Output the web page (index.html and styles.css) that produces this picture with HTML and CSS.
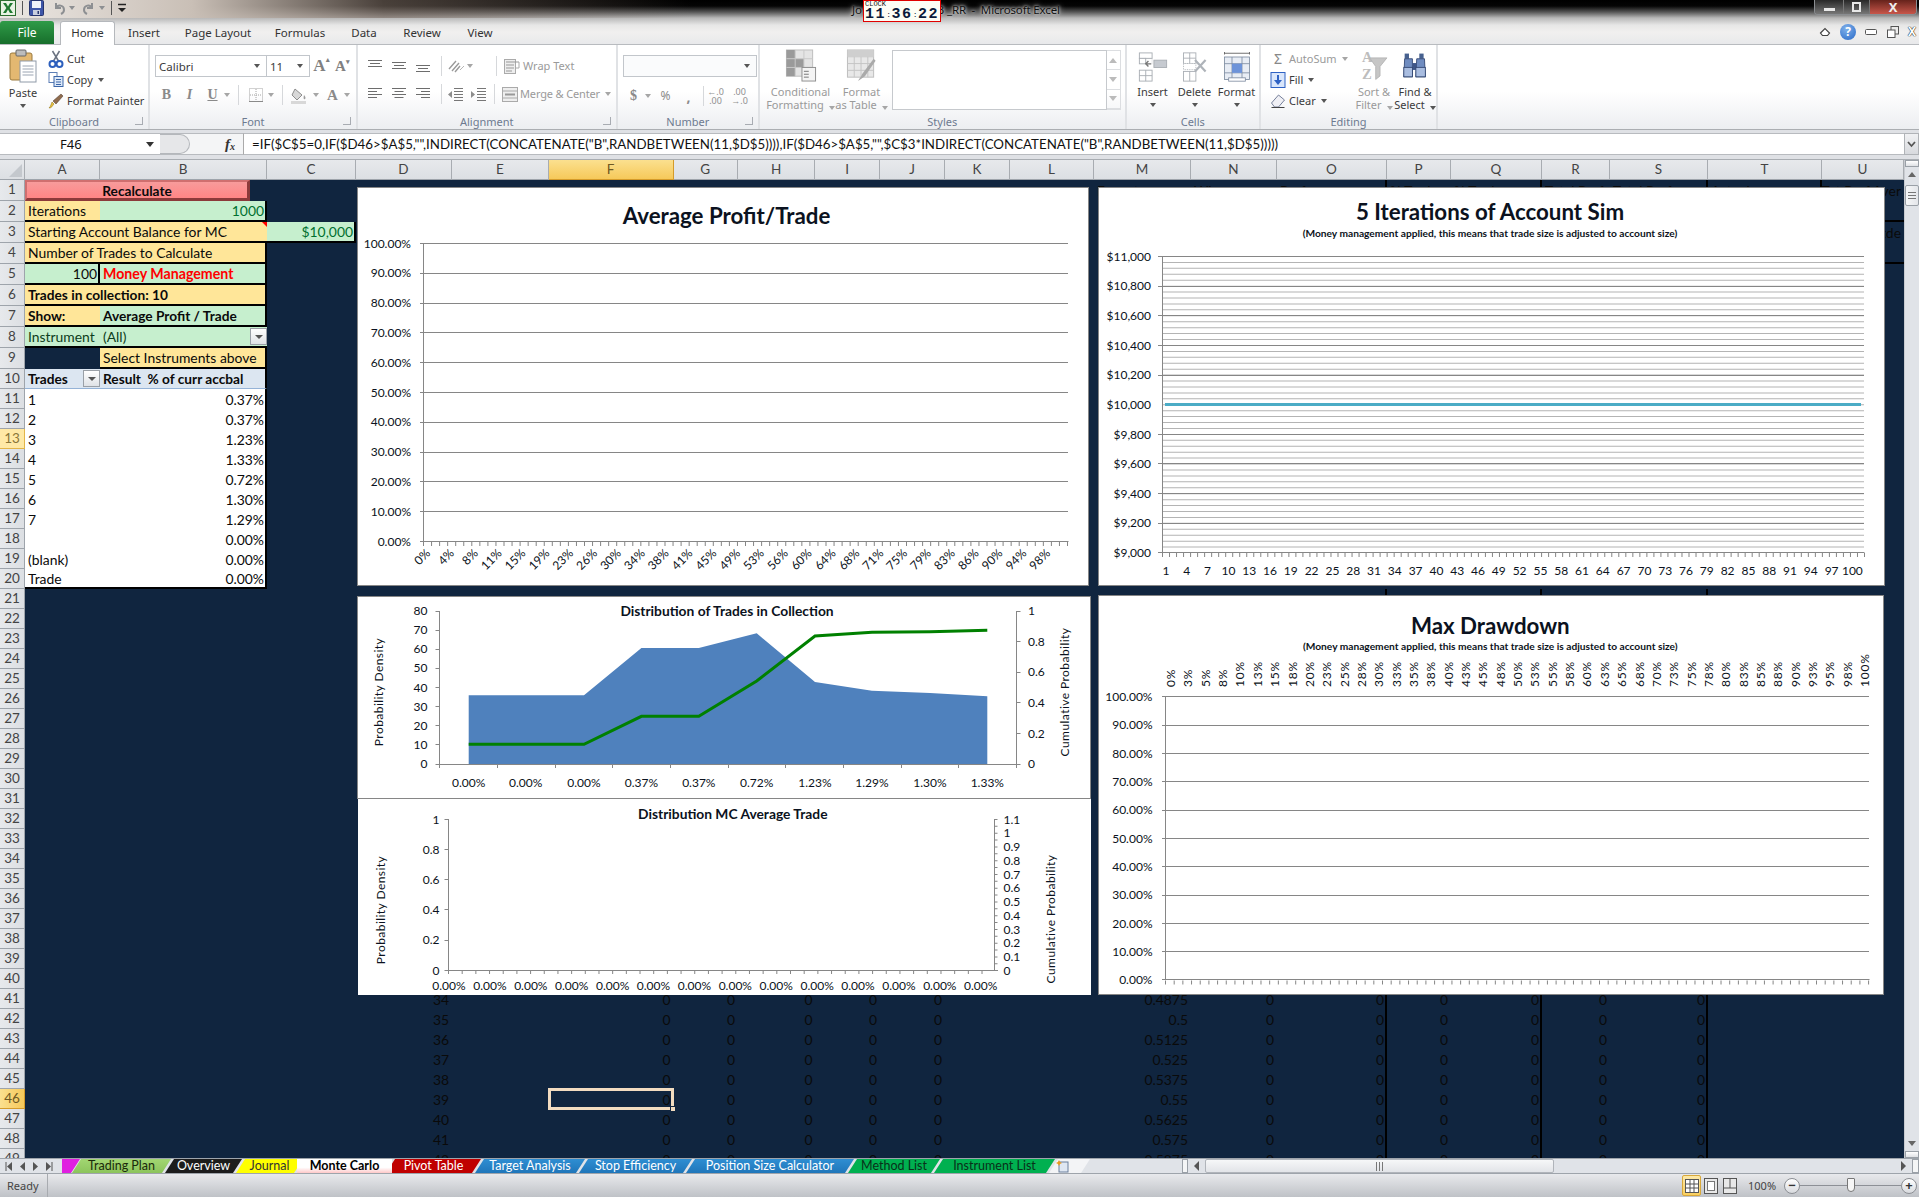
FILE: index.html
```html
<!DOCTYPE html>
<html lang="en">
<head>
<meta charset="utf-8">
<title>Microsoft Excel</title>
<link rel="stylesheet" href="styles.css">
</head>
<body>
<div class="app">
  <header class="top">
    <div class="titlerow">
      <div class="qat">
        <svg class="ic xl" width="16" height="16" viewBox="0 0 16 16"><rect x=".5" y=".5" width="15" height="15" fill="#e8f3e4" stroke="#2d6e31"/><path d="M3 3h3l2 3.4L10 3h3L9.6 8 13 13h-3L8 9.6 6 13H3l3.4-5z" fill="#1f7a30"/></svg>
        <span class="qsep"></span>
        <svg class="ic sv" width="15" height="16" viewBox="0 0 15 16"><rect x=".5" y=".5" width="14" height="15" rx="1" fill="#3d55a8" stroke="#27356f"/><rect x="3" y="1" width="9" height="7" fill="#eef1fa"/><rect x="4" y="10" width="7" height="5" fill="#c8cede"/><rect x="8.5" y="11" width="1.5" height="3" fill="#27356f"/></svg>
        <svg class="ic un" width="12" height="14" viewBox="0 0 12 14"><path d="M3 2v5h5M3 7c2-4 8-3 8 2 0 2-1 3-3 4" fill="none" stroke="#8d8f92" stroke-width="2"/></svg>
        <span class="dd qd"></span>
        <svg class="ic re" width="12" height="14" viewBox="0 0 12 14"><path d="M9 2v5H4M9 7C7 3 1 4 1 9c0 2 1 3 3 4" fill="none" stroke="#8d8f92" stroke-width="2"/></svg>
        <span class="dd qd"></span>
        <span class="qsep"></span>
        <svg class="ic cu" width="8" height="10" viewBox="0 0 8 10"><path d="M0 1.500h8" stroke="#222" stroke-width="1.500"/><path d="M0 5h8L4 9z" fill="#222"/></svg>
      </div>
      <div class="apptitle">Jo<span class="titlegap"></span>B _RR&nbsp; -&nbsp; Microsoft Excel</div>
      <div class="clock"><span class="clocklab">CLOCK</span><div class="clockdigits"><b>11</b><i>:</i><b>36</b><i>:</i><b>22</b></div></div>
      <div class="winbtns">
        <span class="wb wmin"><i></i></span><span class="wb wres"><i></i></span><span class="wb wclose">X</span>
      </div>
    </div>
    <nav class="tabrow">
      <span class="filetab">File</span>
      <span class="tab home">Home</span>
      <span class="tab w56">Insert</span>
      <span class="tab w92">Page Layout</span>
      <span class="tab w72">Formulas</span>
      <span class="tab w56">Data</span>
      <span class="tab w60">Review</span>
      <span class="tab w56">View</span>
      <div class="helpbtns">
        <svg width="12" height="10" viewBox="0 0 12 10"><path d="M1.500 6 6 1.500 10.500 6 8.500 8.500h-5z" fill="#fff" stroke="#444" stroke-width="1.200"/></svg>
        <span class="help">?</span>
        <svg width="12" height="8" viewBox="0 0 12 8"><rect x=".5" y="1.500" width="11" height="5" rx="1" fill="#fff" stroke="#555"/></svg>
        <svg width="12" height="12" viewBox="0 0 12 12"><rect x="4" y=".5" width="7.500" height="7.500" fill="none" stroke="#555"/><rect x=".5" y="4" width="7.500" height="7.500" fill="#fff" stroke="#555"/></svg>
        <span class="bookx">X</span>
      </div>
    </nav>
  </header>

  <section class="ribbon">
    <div class="grp g1">
      <div class="gbody">
        <div class="bigbtn paste">
          <svg width="28" height="34" viewBox="0 0 28 34"><rect x="1" y="4" width="22" height="27" rx="2" fill="#e3b871" stroke="#9a7a3e"/><rect x="7" y="1" width="10" height="6" rx="1" fill="#bcbcbc" stroke="#666"/><rect x="11" y="12" width="16" height="21" fill="#fff" stroke="#8f9aa8"/><path d="M13.500 17h11M13.500 20h11M13.500 23h11M13.500 26h11" stroke="#9aa4b2"/></svg>
          <span class="biglab">Paste</span>
          <span class="dd"></span>
        </div>
        <div class="smallcol">
          <div class="sm"><svg width="15" height="18" viewBox="0 0 15 18"><path d="M4 1l6 10M11 1L5 11" stroke="#6a7280" stroke-width="1.500"/><circle cx="4" cy="14" r="3" fill="none" stroke="#2c5fbd" stroke-width="2"/><circle cx="11" cy="14" r="3" fill="none" stroke="#2c5fbd" stroke-width="2"/></svg>Cut</div>
          <div class="sm"><svg width="15" height="15" viewBox="0 0 15 15"><rect x=".5" y=".5" width="8" height="10" fill="#fff" stroke="#5d7fb5"/><rect x="5.500" y="4.500" width="9" height="10" fill="#dce8f8" stroke="#3c66a8"/><path d="M7.500 7.500h5M7.500 10h5M7.500 12.500h5" stroke="#3c66a8"/></svg>Copy<span class="dd ml"></span></div>
          <div class="sm"><svg width="16" height="16" viewBox="0 0 16 16"><path d="M1 15c3 0 3-2 5-4l-2-2C3 11 3 13 1 15z" fill="#e8c23d" stroke="#8a6d12" stroke-width=".5"/><path d="M5 8l3 3 7-8-2-2z" fill="#8f6b4d" stroke="#4a3728" stroke-width=".5"/></svg>Format Painter</div>
        </div>
      </div>
      <div class="glabel">Clipboard<span class="launch"></span></div>
    </div>

    <div class="grp g2">
      <div class="gbody stack">
        <div class="frow f1">
          <span class="combo fname">Calibri<span class="dd right"></span></span>
          <span class="combo fsize">11<span class="dd right"></span></span>
          <span class="glyph big">A<sup>▴</sup></span>
          <span class="glyph mid">A<sup>▾</sup></span>
        </div>
        <div class="frow f2">
          <span class="gi serif w22">B</span>
          <span class="gi serif it w22">I</span>
          <span class="gi serif un w22">U</span><span class="dd gr"></span>
          <span class="vsep s1"></span>
          <svg class="bd" width="16" height="16" viewBox="0 0 16 16"><rect x="1.500" y="1.500" width="13" height="13" fill="none" stroke="#a4a4a4" stroke-dasharray="1 1"/><path d="M8 2v12M2 8h12" stroke="#a4a4a4" stroke-dasharray="1 1"/><path d="M1 14.500h14" stroke="#8a8a8a"/></svg><span class="dd gr s2"></span>
          <span class="vsep s3"></span>
          <svg class="fl" width="18" height="18" viewBox="0 0 18 18"><path d="M5 3l7 6-5 5-5-5z" fill="#d8d8d8" stroke="#8d8d8d"/><path d="M14 9c1.500 2 2 3 1 4s-2 0-1-4z" fill="#9c9c9c"/><rect x="1" y="15" width="15" height="3" fill="#d8d8d8"/></svg><span class="dd gr s4"></span>
          <span class="gi serif w22 s5">A</span><span class="dd gr"></span>
        </div>
      </div>
      <div class="glabel">Font<span class="launch"></span></div>
    </div>

    <div class="grp g3">
      <div class="gbody stack">
        <div class="frow a1">
          <svg class="al" width="14" height="12" viewBox="0 0 14 12"><path d="M0 .5h14M2 3.500h10M0 6.500h14" stroke="#6d6d6d"/></svg>
          <svg class="al" width="14" height="12" viewBox="0 0 14 12"><path d="M0 2.500h14M2 5.500h10M0 8.500h14" stroke="#6d6d6d"/></svg>
          <svg class="al" width="14" height="12" viewBox="0 0 14 12"><path d="M0 5.500h14M2 8.500h10M0 11.500h14" stroke="#6d6d6d"/></svg>
          <span class="vsep a1s"></span>
          <svg class="or" width="18" height="14" viewBox="0 0 18 14"><path d="M2 10l7-8M5 12l7-8M8 13l5-6" stroke="#9a9a9a" stroke-width="1.400"/><path d="M13 11l4-4" stroke="#b5b5b5"/></svg><span class="dd gr"></span>
          <span class="vsep a1t"></span>
          <svg class="wr" width="17" height="15" viewBox="0 0 17 15"><rect x=".5" y=".5" width="11" height="14" fill="#eee" stroke="#aaa"/><path d="M2 3h13M2 6h8M2 9h8M2 12h6" stroke="#999"/><path d="M15 3v6h-4" fill="none" stroke="#aaa"/></svg>
          <span class="dim">Wrap Text</span>
        </div>
        <div class="frow a2">
          <svg class="al" width="14" height="12" viewBox="0 0 14 12"><path d="M0 .5h14M0 3.500h9M0 6.500h14M0 9.500h9" stroke="#6d6d6d"/></svg>
          <svg class="al" width="14" height="12" viewBox="0 0 14 12"><path d="M0 .5h14M2.500 3.500h9M0 6.500h14M2.500 9.500h9" stroke="#6d6d6d"/></svg>
          <svg class="al" width="14" height="12" viewBox="0 0 14 12"><path d="M0 .5h14M5 3.500h9M0 6.500h14M5 9.500h9" stroke="#6d6d6d"/></svg>
          <span class="vsep a2s"></span>
          <svg class="in1" width="15" height="13" viewBox="0 0 15 13"><path d="M6 .5h9M6 3.500h9M6 6.500h9M6 9.500h9M6 12.500h9" stroke="#777"/><path d="M4 3L0 6.500 4 10z" fill="#8d8d8d"/></svg>
          <svg class="in2" width="15" height="13" viewBox="0 0 15 13"><path d="M6 .5h9M6 3.500h9M6 6.500h9M6 9.500h9M6 12.500h9" stroke="#777"/><path d="M0 3l4 3.500L0 10z" fill="#8d8d8d"/></svg>
          <span class="vsep a2t"></span>
          <svg class="wr" width="16" height="15" viewBox="0 0 16 15"><rect x=".5" y=".5" width="15" height="14" fill="#eee" stroke="#aaa"/><path d="M1 4h14M1 11h14" stroke="#aaa"/><path d="M3 7.500h10" stroke="#999" stroke-width="2"/></svg>
          <span class="dim">Merge &amp; Center</span><span class="dd gr ml"></span>
        </div>
      </div>
      <div class="glabel">Alignment<span class="launch"></span></div>
    </div>

    <div class="grp g4">
      <div class="gbody stack">
        <div class="frow n1"><span class="combo nfmt"><span class="dd right"></span></span></div>
        <div class="frow n2">
          <span class="gi serif dol">$</span><span class="dd gr"></span>
          <span class="gi pct">%</span><span class="gi cma">,</span>
          <span class="vsep n2s"></span>
          <span class="dec">←.0<br>.00</span><span class="dec">.00<br>→.0</span>
        </div>
      </div>
      <div class="glabel">Number<span class="launch"></span></div>
    </div>

    <div class="grp g5">
      <div class="gbody">
        <div class="bigbtn dimb cf">
          <svg width="32" height="34" viewBox="0 0 32 34"><rect x="1" y="1" width="27" height="27" fill="#e4e4e4" stroke="#bdbdbd"/><rect x="1" y="1" width="9" height="9" fill="#9a9a9a"/><rect x="1" y="10" width="18" height="9" fill="#9a9a9a"/><rect x="1" y="19" width="9" height="9" fill="#9a9a9a"/><path d="M10 1v27M19 1v27M1 10h27M1 19h27" stroke="#c8c8c8"/><rect x="17" y="19" width="14" height="14" fill="#f4f4f4" stroke="#8f8f8f"/><path d="M19 23h5M19 26h5M19 29h5" stroke="#777"/></svg>
          <span class="biglab2">Conditional<br>Formatting<span class="dd gr ml"></span></span>
        </div>
        <div class="bigbtn dimb ft">
          <svg width="32" height="34" viewBox="0 0 32 34"><rect x="1" y="1" width="27" height="28" fill="#e8e8e8" stroke="#bdbdbd"/><path d="M8 1v28M15 1v28M22 1v28M1 8h27M1 15h27M1 22h27" stroke="#c4c4c4"/><rect x="1" y="1" width="27" height="7" fill="#cfcfcf"/><path d="M30 12L19 28l-7 5c1-3 3-4 4-7l12-16z" fill="#aaa"/></svg>
          <span class="biglab2">Format<br>as Table<span class="dd gr ml"></span></span>
        </div>
        <div class="gallery"></div>
        <div class="galbtns"><span><i class="up"></i></span><span><i class="dn"></i></span><span><i class="dn"></i></span></div>
      </div>
      <div class="glabel">Styles</div>
    </div>

    <div class="grp g6">
      <div class="gbody">
        <div class="bigbtn cellb">
          <svg width="30" height="30" viewBox="0 0 32 33"><rect x="1" y="1" width="14" height="6" fill="#fff" stroke="#a8adb3"/><rect x="1" y="7" width="7" height="6" fill="#fff" stroke="#a8adb3"/><rect x="8" y="7" width="7" height="6" fill="#fff" stroke="#a8adb3" opacity=".3"/><rect x="17" y="9" width="14" height="8" fill="#c6cad0" stroke="#a8adb3"/><path d="M14 13h-6M11 10l-3 3 3 3" fill="none" stroke="#777" stroke-width="1.500"/><rect x="1" y="20" width="14" height="12" fill="#fff" stroke="#a8adb3"/><path d="M8 20v12M1 26h14" stroke="#a8adb3"/></svg>
          <span class="biglab">Insert</span><span class="dd"></span>
        </div>
        <div class="bigbtn cellb">
          <svg width="26" height="30" viewBox="0 0 28 34"><rect x="1" y="1" width="14" height="12" fill="#fff" stroke="#a8adb3"/><path d="M8 1v12M1 7h14" stroke="#a8adb3"/><rect x="1" y="13" width="14" height="7" fill="#fff" stroke="#a8adb3" stroke-dasharray="1 1"/><rect x="1" y="22" width="14" height="11" fill="#fff" stroke="#a8adb3"/><path d="M8 22v11" stroke="#a8adb3"/><path d="M14 9l12 13M26 9L14 22" stroke="#aeb3b9" stroke-width="2.500"/></svg>
          <span class="biglab">Delete</span><span class="dd"></span>
        </div>
        <div class="bigbtn cellb">
          <svg width="30" height="30" viewBox="0 0 32 36"><path d="M1 1.500h30M1 0v3M31 0v3" stroke="#555"/><rect x="1" y="6" width="30" height="27" fill="#e8edf5" stroke="#7d8ba0"/><path d="M10 6v27M22 6v27M1 14h30M1 25h30" stroke="#7d8ba0"/><rect x="10" y="14" width="12" height="11" fill="#6d93d9"/><rect x="6" y="31" width="20" height="4" fill="#fff" stroke="#7d8ba0"/></svg>
          <span class="biglab">Format</span><span class="dd"></span>
        </div>
      </div>
      <div class="glabel">Cells</div>
    </div>

    <div class="grp g7">
      <div class="gbody">
        <div class="smallcol edit">
          <div class="sm dim"><span class="sigma">Σ</span>AutoSum<span class="dd gr ml"></span></div>
          <div class="sm"><svg width="15" height="16" viewBox="0 0 15 16"><rect x=".5" y=".5" width="14" height="15" fill="#d9e6fb" stroke="#2e62c4"/><path d="M7.500 3v7" stroke="#2e62c4" stroke-width="2"/><path d="M3.500 8h8l-4 5z" fill="#2e62c4"/></svg>Fill<span class="dd ml"></span></div>
          <div class="sm"><svg width="15" height="15" viewBox="0 0 15 15"><path d="M1 10l7-8 6 5-6 7H4z" fill="#f0f0f5" stroke="#76809a"/><path d="M1 14.500h13" stroke="#444"/></svg>Clear<span class="dd ml"></span></div>
        </div>
        <div class="bigbtn dimb sortb">
          <svg width="32" height="32" viewBox="0 0 32 36"><text class="azt" x="2" y="13">A</text><text class="azt" x="2" y="33">Z</text><path d="M11 8h20l-8 10v11l-5 4V18z" fill="#c6c6c6" stroke="#b2b2b2"/></svg>
          <span class="biglab2">Sort &amp;<br>Filter<span class="dd gr ml"></span></span>
        </div>
        <div class="bigbtn findb">
          <svg width="28" height="32" viewBox="0 0 30 36"><rect x="3" y="3" width="5" height="6" fill="#47618f"/><rect x="20" y="3" width="5" height="6" fill="#47618f"/><path d="M3 9h9v21H2zM17 9h9l1 21H16z" fill="#6f8cc0" stroke="#2f4470"/><rect x="12" y="14" width="5" height="8" fill="#3e5688"/><rect x="2" y="19" width="10" height="11" fill="#a9bde0" stroke="#2f4470"/><rect x="16" y="19" width="11" height="11" fill="#a9bde0" stroke="#2f4470"/></svg>
          <span class="biglab2">Find &amp;<br>Select<span class="dd ml"></span></span>
        </div>
      </div>
      <div class="glabel">Editing</div>
    </div>
  </section>

  <div class="fbar">
    <div class="namebox"><span class="nametext">F46</span><span class="dd dark"></span></div>
    <div class="fmid"><span class="ball"></span><span class="fx">f<sub>x</sub></span></div>
    <div class="finput">=IF($C$5=0,IF($D46&gt;$A$5,"",INDIRECT(CONCATENATE("B",RANDBETWEEN(11,$D$5)))),IF($D46&gt;$A$5,"",$C$3*INDIRECT(CONCATENATE("B",RANDBETWEEN(11,$D$5)))))</div>
    <div class="fexp"><svg width="9" height="7" viewBox="0 0 9 7"><path d="M1 1l3.500 4L8 1" fill="none" stroke="#555" stroke-width="1.800"/></svg></div>
  </div>

  <div class="work">
    <div class="grid">
      <div class="row chead">
        <div class="corner"><i></i></div>
        <div>A</div><div>B</div><div>C</div><div>D</div><div>E</div><div class="on">F</div><div>G</div><div>H</div><div>I</div><div>J</div><div>K</div><div>L</div><div>M</div><div>N</div><div>O</div><div>P</div><div>Q</div><div>R</div><div>S</div><div>T</div><div>U</div>
      </div>

      <div class="row tall"><div class="rh">1</div><div class="cell sp-ab"><div class="recalc">Recalculate</div></div>
        <div class="cell m">Expect</div><div class="cell n">Wins</div><div class="cell o rb">Prof</div><div class="cell p">% Trade</div><div class="cell q rb">% Trade</div><div class="cell r">Total Prof</div><div class="cell s rb">Total Prof</div><div class="cell t rb">Actual</div><div class="cell u end">Tot Prof Aver</div></div>
      <div class="row tall"><div class="rh">2</div><div class="cell a yel bb">Iterations</div><div class="cell b grn end dkg bb br">1000</div><div class="cell u bb"></div></div>
      <div class="row tall"><div class="rh">3</div><div class="cell sp-ab yel bb">Starting Account Balance for MC<i class="note"></i></div><div class="cell c grn end dkg bb br">$10,000</div><div class="cell u end">Stde</div></div>
      <div class="row tall"><div class="rh">4</div><div class="cell sp-ab yel bb br">Number of Trades to Calculate</div><div class="cell u bb"></div></div>
      <div class="row tall"><div class="rh">5</div><div class="cell a grn end bb br">100</div><div class="cell b grn bb br red"><b>Money Management</b></div></div>
      <div class="row tall"><div class="rh">6</div><div class="cell sp-ab yel bb br"><b>Trades in collection: 10</b></div></div>
      <div class="row tall"><div class="rh">7</div><div class="cell a yel bb"><b>Show:</b></div><div class="cell b grn bb br"><b>Average Profit / Trade</b></div></div>
      <div class="row tall"><div class="rh">8</div><div class="cell a grn bb dkt">Instrument</div><div class="cell b grn bb dkt">(All)<i class="fbtn end-btn"></i></div></div>
      <div class="row tall"><div class="rh">9</div><div class="cell b yel bb br">Select Instruments above</div></div>
      <div class="row"><div class="rh">10</div><div class="cell a pv"><b>Trades</b><i class="fbtn end-btn"></i></div><div class="cell b pv br"><b>Result&nbsp; % of curr accbal</b></div></div>
      <div class="row"><div class="rh">11</div><div class="cell a wh">1</div><div class="cell b wh end br">0.37%</div></div>
      <div class="row"><div class="rh">12</div><div class="cell a wh">2</div><div class="cell b wh end br">0.37%</div></div>
      <div class="row"><div class="rh act13">13</div><div class="cell a wh">3</div><div class="cell b wh end br">1.23%</div></div>
      <div class="row"><div class="rh">14</div><div class="cell a wh">4</div><div class="cell b wh end br">1.33%</div></div>
      <div class="row"><div class="rh">15</div><div class="cell a wh">5</div><div class="cell b wh end br">0.72%</div></div>
      <div class="row"><div class="rh">16</div><div class="cell a wh">6</div><div class="cell b wh end br">1.30%</div></div>
      <div class="row"><div class="rh">17</div><div class="cell a wh">7</div><div class="cell b wh end br">1.29%</div></div>
      <div class="row"><div class="rh">18</div><div class="cell a wh"></div><div class="cell b wh end br">0.00%</div></div>
      <div class="row"><div class="rh">19</div><div class="cell a wh">(blank)</div><div class="cell b wh end br">0.00%</div></div>
      <div class="row"><div class="rh">20</div><div class="cell a wh bb">Trade</div><div class="cell b wh end bb br">0.00%</div></div>
      <div class="row"><div class="rh">21</div><div class="cell o rb"></div><div class="cell q rb"></div><div class="cell s rb"></div></div>
      <div class="row"><div class="rh">22</div></div><div class="row"><div class="rh">23</div></div><div class="row"><div class="rh">24</div></div><div class="row"><div class="rh">25</div></div><div class="row"><div class="rh">26</div></div><div class="row"><div class="rh">27</div></div><div class="row"><div class="rh">28</div></div><div class="row"><div class="rh">29</div></div><div class="row"><div class="rh">30</div></div>
      <div class="row"><div class="rh">31</div></div><div class="row"><div class="rh">32</div></div><div class="row"><div class="rh">33</div></div><div class="row"><div class="rh">34</div></div><div class="row"><div class="rh">35</div></div><div class="row"><div class="rh">36</div></div><div class="row"><div class="rh">37</div></div><div class="row"><div class="rh">38</div></div><div class="row"><div class="rh">39</div></div><div class="row"><div class="rh">40</div></div>
      <div class="row"><div class="rh">41</div><div class="cell d end">34</div><div class="cell f end">0</div><div class="cell g end">0</div><div class="cell h end">0</div><div class="cell i end">0</div><div class="cell j end">0</div><div class="cell m end">0.4875</div><div class="cell n end">0</div><div class="cell o end rb">0</div><div class="cell p end">0</div><div class="cell q end rb">0</div><div class="cell r end">0</div><div class="cell s end rb">0</div></div>
      <div class="row"><div class="rh">42</div><div class="cell d end">35</div><div class="cell f end">0</div><div class="cell g end">0</div><div class="cell h end">0</div><div class="cell i end">0</div><div class="cell j end">0</div><div class="cell m end">0.5</div><div class="cell n end">0</div><div class="cell o end rb">0</div><div class="cell p end">0</div><div class="cell q end rb">0</div><div class="cell r end">0</div><div class="cell s end rb">0</div></div>
      <div class="row"><div class="rh">43</div><div class="cell d end">36</div><div class="cell f end">0</div><div class="cell g end">0</div><div class="cell h end">0</div><div class="cell i end">0</div><div class="cell j end">0</div><div class="cell m end">0.5125</div><div class="cell n end">0</div><div class="cell o end rb">0</div><div class="cell p end">0</div><div class="cell q end rb">0</div><div class="cell r end">0</div><div class="cell s end rb">0</div></div>
      <div class="row"><div class="rh">44</div><div class="cell d end">37</div><div class="cell f end">0</div><div class="cell g end">0</div><div class="cell h end">0</div><div class="cell i end">0</div><div class="cell j end">0</div><div class="cell m end">0.525</div><div class="cell n end">0</div><div class="cell o end rb">0</div><div class="cell p end">0</div><div class="cell q end rb">0</div><div class="cell r end">0</div><div class="cell s end rb">0</div></div>
      <div class="row"><div class="rh">45</div><div class="cell d end">38</div><div class="cell f end">0</div><div class="cell g end">0</div><div class="cell h end">0</div><div class="cell i end">0</div><div class="cell j end">0</div><div class="cell m end">0.5375</div><div class="cell n end">0</div><div class="cell o end rb">0</div><div class="cell p end">0</div><div class="cell q end rb">0</div><div class="cell r end">0</div><div class="cell s end rb">0</div></div>
      <div class="row"><div class="rh act46">46</div><div class="cell d end">39</div><div class="cell f end">0</div><div class="cell g end">0</div><div class="cell h end">0</div><div class="cell i end">0</div><div class="cell j end">0</div><div class="cell m end">0.55</div><div class="cell n end">0</div><div class="cell o end rb">0</div><div class="cell p end">0</div><div class="cell q end rb">0</div><div class="cell r end">0</div><div class="cell s end rb">0</div></div>
      <div class="row"><div class="rh">47</div><div class="cell d end">40</div><div class="cell f end">0</div><div class="cell g end">0</div><div class="cell h end">0</div><div class="cell i end">0</div><div class="cell j end">0</div><div class="cell m end">0.5625</div><div class="cell n end">0</div><div class="cell o end rb">0</div><div class="cell p end">0</div><div class="cell q end rb">0</div><div class="cell r end">0</div><div class="cell s end rb">0</div></div>
      <div class="row"><div class="rh">48</div><div class="cell d end">41</div><div class="cell f end">0</div><div class="cell g end">0</div><div class="cell h end">0</div><div class="cell i end">0</div><div class="cell j end">0</div><div class="cell m end">0.575</div><div class="cell n end">0</div><div class="cell o end rb">0</div><div class="cell p end">0</div><div class="cell q end rb">0</div><div class="cell r end">0</div><div class="cell s end rb">0</div></div>
      <div class="row"><div class="rh">49</div><div class="cell d end">42</div><div class="cell f end">0</div><div class="cell g end">0</div><div class="cell h end">0</div><div class="cell i end">0</div><div class="cell j end">0</div><div class="cell m end">0.5875</div><div class="cell n end">0</div><div class="cell o end rb">0</div><div class="cell p end">0</div><div class="cell q end rb">0</div><div class="cell r end">0</div><div class="cell s end rb">0</div></div>

      <div class="selbox"><i></i></div>

      <svg class="chart c1" width="732" height="399" viewBox="357 187 732 399">
        <text class="ttl" x="726.500" y="224">Average Profit/Trade</text>
        <path class="maj" d="M420 243.500H1068M420 273.500H1068M420 303.500H1068M420 332.500H1068M420 362.500H1068M420 392.500H1068M420 422.500H1068M420 452.500H1068M420 481.500H1068M420 511.500H1068M420 541.500H1068.500M423.500 243V541"/>
        <line class="tk4" x1="423" x2="1069" y1="544" y2="544" stroke-dasharray="1 7.05"/>
        <g class="yl"><text x="411" y="247.500">100.00%</text><text x="411" y="277">90.00%</text><text x="411" y="307">80.00%</text><text x="411" y="337">70.00%</text><text x="411" y="366.500">60.00%</text><text x="411" y="396.500">50.00%</text><text x="411" y="426">40.00%</text><text x="411" y="456">30.00%</text><text x="411" y="486">20.00%</text><text x="411" y="515.500">10.00%</text><text x="411" y="545.500">0.00%</text></g>
        <g class="yl">
          <text transform="translate(431 554) rotate(-45)">0%</text><text transform="translate(454.900 554) rotate(-45)">4%</text><text transform="translate(478.700 554) rotate(-45)">8%</text><text transform="translate(502.600 554) rotate(-45)">11%</text><text transform="translate(526.400 554) rotate(-45)">15%</text><text transform="translate(550.300 554) rotate(-45)">19%</text><text transform="translate(574.100 554) rotate(-45)">23%</text><text transform="translate(598 554) rotate(-45)">26%</text><text transform="translate(621.800 554) rotate(-45)">30%</text><text transform="translate(645.700 554) rotate(-45)">34%</text><text transform="translate(669.500 554) rotate(-45)">38%</text><text transform="translate(693.400 554) rotate(-45)">41%</text><text transform="translate(717.200 554) rotate(-45)">45%</text><text transform="translate(741.100 554) rotate(-45)">49%</text><text transform="translate(764.900 554) rotate(-45)">53%</text><text transform="translate(788.800 554) rotate(-45)">56%</text><text transform="translate(812.600 554) rotate(-45)">60%</text><text transform="translate(836.500 554) rotate(-45)">64%</text><text transform="translate(860.300 554) rotate(-45)">68%</text><text transform="translate(884.200 554) rotate(-45)">71%</text><text transform="translate(908 554) rotate(-45)">75%</text><text transform="translate(931.900 554) rotate(-45)">79%</text><text transform="translate(955.700 554) rotate(-45)">83%</text><text transform="translate(979.600 554) rotate(-45)">86%</text><text transform="translate(1003.400 554) rotate(-45)">90%</text><text transform="translate(1027.300 554) rotate(-45)">94%</text><text transform="translate(1051 554) rotate(-45)">98%</text>
        </g>
      </svg>

      <svg class="chart c2" width="787" height="399" viewBox="1098 187 787 399">
        <text class="ttl" x="1490" y="220">5 Iterations of Account Sim</text>
        <text class="sub" x="1490" y="236.500">(Money management applied, this means that trade size is adjusted to account size)</text>
        <line class="minor" x1="1513" x2="1513" y1="256" y2="553" stroke-width="702" stroke-dasharray="1 4.930"/>
        <path class="maj" d="M1158 256.500H1864M1158 286.500H1864M1158 315.500H1864M1158 345.500H1864M1158 375.500H1864M1158 434.500H1864M1158 463.500H1864M1158 493.500H1864M1158 523.500H1864M1158 552.500H1864.500M1162.500 256V553"/>
        <line class="tk4" x1="1162" x2="1865" y1="555" y2="555" stroke-dasharray="1 6.020"/>
        <line class="acc" x1="1165" x2="1861" y1="404.500" y2="404.500"/>
        <g class="yl"><text x="1151" y="260.500">$11,000</text><text x="1151" y="290">$10,800</text><text x="1151" y="320">$10,600</text><text x="1151" y="349.500">$10,400</text><text x="1151" y="379">$10,200</text><text x="1151" y="409">$10,000</text><text x="1151" y="438.500">$9,800</text><text x="1151" y="468">$9,600</text><text x="1151" y="497.500">$9,400</text><text x="1151" y="527">$9,200</text><text x="1151" y="557">$9,000</text></g>
        <g class="xl">
          <text x="1166" y="574.500">1</text><text x="1186.800" y="574.500">4</text><text x="1207.600" y="574.500">7</text><text x="1228.400" y="574.500">10</text><text x="1249.200" y="574.500">13</text><text x="1270" y="574.500">16</text><text x="1290.800" y="574.500">19</text><text x="1311.600" y="574.500">22</text><text x="1332.400" y="574.500">25</text><text x="1353.200" y="574.500">28</text><text x="1374" y="574.500">31</text><text x="1394.800" y="574.500">34</text><text x="1415.600" y="574.500">37</text><text x="1436.400" y="574.500">40</text><text x="1457.200" y="574.500">43</text><text x="1478" y="574.500">46</text><text x="1498.800" y="574.500">49</text><text x="1519.600" y="574.500">52</text><text x="1540.400" y="574.500">55</text><text x="1561.200" y="574.500">58</text><text x="1582" y="574.500">61</text><text x="1602.800" y="574.500">64</text><text x="1623.600" y="574.500">67</text><text x="1644.400" y="574.500">70</text><text x="1665.200" y="574.500">73</text><text x="1686" y="574.500">76</text><text x="1706.800" y="574.500">79</text><text x="1727.600" y="574.500">82</text><text x="1748.400" y="574.500">85</text><text x="1769.200" y="574.500">88</text><text x="1790" y="574.500">91</text><text x="1810.800" y="574.500">94</text><text x="1831.600" y="574.500">97</text><text x="1852.400" y="574.500">100</text>
        </g>
      </svg>

      <svg class="chart c3" width="734" height="203" viewBox="357 596 734 203">
        <polygon class="area" points="468.700,764 468.700,695.300 584,695.300 641.400,648 698.800,648 756.700,633.300 815,682 872,690.700 930,693 987.300,696.300 987.300,764"/>
        <polyline class="cum" points="468.700,744.300 584,744.300 641.400,716.300 698.800,716.300 756.700,681 815,636 872,632.300 930,631.700 987.300,630.300"/>
        <path class="maj" d="M439.500 611V768M435.500 611.500H439.500M435.500 630.500H439.500M435.500 649.500H439.500M435.500 668.500H439.500M435.500 687.500H439.500M435.500 706.500H439.500M435.500 725.500H439.500M435.500 744.500H439.500M435.500 764.500H1020.500M1016.500 611V768M1016.500 611.500H1020.500M1016.500 641.500H1020.500M1016.500 672.500H1020.500M1016.500 702.500H1020.500M1016.500 733.500H1020.500M497.500 764V768M555.500 764V768M612.500 764V768M670.500 764V768M728.500 764V768M785.500 764V768M843.500 764V768M901.500 764V768M958.500 764V768"/>
        <text class="ttls" x="727" y="615.500">Distribution of Trades in Collection</text>
        <g class="yl"><text x="427.500" y="615">80</text><text x="427.500" y="634">70</text><text x="427.500" y="653">60</text><text x="427.500" y="672">50</text><text x="427.500" y="691.500">40</text><text x="427.500" y="710.500">30</text><text x="427.500" y="730">20</text><text x="427.500" y="749">10</text><text x="427.500" y="768">0</text></g>
        <g class="rl"><text x="1028" y="615">1</text><text x="1028" y="645.500">0.8</text><text x="1028" y="676">0.6</text><text x="1028" y="707">0.4</text><text x="1028" y="737.500">0.2</text><text x="1028" y="768">0</text></g>
        <g class="xl"><text x="468.700" y="786.500">0.00%</text><text x="525.600" y="786.500">0.00%</text><text x="584" y="786.500">0.00%</text><text x="641.400" y="786.500">0.37%</text><text x="698.800" y="786.500">0.37%</text><text x="756.700" y="786.500">0.72%</text><text x="815" y="786.500">1.23%</text><text x="872" y="786.500">1.29%</text><text x="930" y="786.500">1.30%</text><text x="987.300" y="786.500">1.33%</text></g>
        <text class="axt" transform="translate(383 692) rotate(-90)">Probability Density</text>
        <text class="axt" transform="translate(1069 692) rotate(-90)">Cumulative Probability</text>
      </svg>

      <svg class="chart c4" width="733" height="196" viewBox="358 799 733 196">
        <text class="ttls" x="732.800" y="819">Distribution MC Average Trade</text>
        <path class="maj" d="M448.500 819V971M444.500 819.500H448.500M444.500 849.500H448.500M444.500 879.500H448.500M444.500 909.500H448.500M444.500 940.500H448.500M444.500 970.500H998M994.500 819V971"/>
        <line class="tk3" x1="448" x2="995" y1="972.500" y2="972.500" stroke-dasharray="1 12.680"/>
        <line class="tk3" x1="996" x2="996" y1="819" y2="971" stroke-dasharray="1 5.870"/>
        <g class="yl"><text x="439.500" y="823.500">1</text><text x="439.500" y="853.500">0.8</text><text x="439.500" y="884">0.6</text><text x="439.500" y="914">0.4</text><text x="439.500" y="944">0.2</text><text x="439.500" y="974.500">0</text></g>
        <g class="rl"><text x="1003.500" y="823.500">1.1</text><text x="1003.500" y="837">1</text><text x="1003.500" y="851">0.9</text><text x="1003.500" y="864.500">0.8</text><text x="1003.500" y="878.500">0.7</text><text x="1003.500" y="892">0.6</text><text x="1003.500" y="906">0.5</text><text x="1003.500" y="919.500">0.4</text><text x="1003.500" y="933.500">0.3</text><text x="1003.500" y="947">0.2</text><text x="1003.500" y="961">0.1</text><text x="1003.500" y="974.500">0</text></g>
        <g class="xl"><text x="449" y="989.500">0.00%</text><text x="489.900" y="989.500">0.00%</text><text x="530.800" y="989.500">0.00%</text><text x="571.700" y="989.500">0.00%</text><text x="612.600" y="989.500">0.00%</text><text x="653.500" y="989.500">0.00%</text><text x="694.400" y="989.500">0.00%</text><text x="735.300" y="989.500">0.00%</text><text x="776.200" y="989.500">0.00%</text><text x="817.100" y="989.500">0.00%</text><text x="858" y="989.500">0.00%</text><text x="898.900" y="989.500">0.00%</text><text x="939.800" y="989.500">0.00%</text><text x="980.700" y="989.500">0.00%</text></g>
        <text class="axt" transform="translate(385 910) rotate(-90)">Probability Density</text>
        <text class="axt" transform="translate(1055 919) rotate(-90)">Cumulative Probability</text>
      </svg>

      <svg class="chart c5" width="786" height="400" viewBox="1098 595 786 400">
        <text class="ttl" x="1490.300" y="634">Max Drawdown</text>
        <text class="sub" x="1490.300" y="649.500">(Money management applied, this means that trade size is adjusted to account size)</text>
        <path class="maj" d="M1162 696.500H1869M1162 725.500H1869M1162 753.500H1869M1162 781.500H1869M1162 810.500H1869M1162 838.500H1869M1162 866.500H1869M1162 895.500H1869M1162 923.500H1869M1162 951.500H1869M1162 979.500H1869.500M1165.500 696V980"/>
        <line class="tk4" x1="1165" x2="1870" y1="982.500" y2="982.500" stroke-dasharray="1 7.680"/>
        <g class="yl"><text x="1152.500" y="701">100.00%</text><text x="1152.500" y="729">90.00%</text><text x="1152.500" y="757.500">80.00%</text><text x="1152.500" y="786">70.00%</text><text x="1152.500" y="814">60.00%</text><text x="1152.500" y="842.500">50.00%</text><text x="1152.500" y="870.500">40.00%</text><text x="1152.500" y="899">30.00%</text><text x="1152.500" y="927.500">20.00%</text><text x="1152.500" y="955.500">10.00%</text><text x="1152.500" y="984">0.00%</text></g>
        <g class="vl">
          <text transform="translate(1175 687) rotate(-90)">0%</text><text transform="translate(1192.400 687) rotate(-90)">3%</text><text transform="translate(1209.700 687) rotate(-90)">5%</text><text transform="translate(1227.100 687) rotate(-90)">8%</text><text transform="translate(1244.400 687) rotate(-90)">10%</text><text transform="translate(1261.800 687) rotate(-90)">13%</text><text transform="translate(1279.100 687) rotate(-90)">15%</text><text transform="translate(1296.500 687) rotate(-90)">18%</text><text transform="translate(1313.800 687) rotate(-90)">20%</text><text transform="translate(1331.200 687) rotate(-90)">23%</text><text transform="translate(1348.500 687) rotate(-90)">25%</text><text transform="translate(1365.900 687) rotate(-90)">28%</text><text transform="translate(1383.200 687) rotate(-90)">30%</text><text transform="translate(1400.600 687) rotate(-90)">33%</text><text transform="translate(1417.900 687) rotate(-90)">35%</text><text transform="translate(1435.300 687) rotate(-90)">38%</text><text transform="translate(1452.600 687) rotate(-90)">40%</text><text transform="translate(1470 687) rotate(-90)">43%</text><text transform="translate(1487.300 687) rotate(-90)">45%</text><text transform="translate(1504.700 687) rotate(-90)">48%</text><text transform="translate(1522 687) rotate(-90)">50%</text><text transform="translate(1539.400 687) rotate(-90)">53%</text><text transform="translate(1556.700 687) rotate(-90)">55%</text><text transform="translate(1574.100 687) rotate(-90)">58%</text><text transform="translate(1591.400 687) rotate(-90)">60%</text><text transform="translate(1608.800 687) rotate(-90)">63%</text><text transform="translate(1626.100 687) rotate(-90)">65%</text><text transform="translate(1643.500 687) rotate(-90)">68%</text><text transform="translate(1660.800 687) rotate(-90)">70%</text><text transform="translate(1678.200 687) rotate(-90)">73%</text><text transform="translate(1695.500 687) rotate(-90)">75%</text><text transform="translate(1712.900 687) rotate(-90)">78%</text><text transform="translate(1730.200 687) rotate(-90)">80%</text><text transform="translate(1747.600 687) rotate(-90)">83%</text><text transform="translate(1764.900 687) rotate(-90)">85%</text><text transform="translate(1782.300 687) rotate(-90)">88%</text><text transform="translate(1799.600 687) rotate(-90)">90%</text><text transform="translate(1817 687) rotate(-90)">93%</text><text transform="translate(1834.300 687) rotate(-90)">95%</text><text transform="translate(1851.700 687) rotate(-90)">98%</text><text transform="translate(1869 687) rotate(-90)">100%</text>
        </g>
      </svg>
    </div>

    <div class="vscroll">
      <span class="splitv"></span>
      <span class="vbtn"><i class="up"></i></span>
      <span class="vgap"></span>
      <span class="vthumb"><svg width="8" height="7" viewBox="0 0 8 7"><path d="M0 .5h8M0 3.500h8M0 6.500h8" stroke="#777"/></svg></span>
      <span class="vtrack"></span>
      <span class="vbtn"><i class="dn"></i></span>
      <span class="splitv low"></span>
    </div>
  </div>

  <div class="sheetbar">
    <div class="sheetnav">
      <svg width="8" height="9" viewBox="0 0 8 9"><path d="M1 0v9" stroke="#555"/><path d="M7 0v9L2 4.500z" fill="#555"/></svg>
      <svg width="6" height="9" viewBox="0 0 6 9"><path d="M5 0v9L0 4.500z" fill="#555"/></svg>
      <svg width="6" height="9" viewBox="0 0 6 9"><path d="M1 0v9l5-4.500z" fill="#555"/></svg>
      <svg width="8" height="9" viewBox="0 0 8 9"><path d="M7 0v9" stroke="#555"/><path d="M1 0v9l5-4.500z" fill="#555"/></svg>
    </div>
    <div class="sheets">
      <span class="st st0"></span>
      <span class="st st1">Trading Plan</span>
      <span class="st st2">Overview</span>
      <span class="st st3">Journal</span>
      <span class="st st4">Monte Carlo</span>
      <span class="st st5">Pivot Table</span>
      <span class="st st6">Target Analysis</span>
      <span class="st st7">Stop Efficiency</span>
      <span class="st st8">Position Size Calculator</span>
      <span class="st st9">Method List</span>
      <span class="st st10">Instrument List</span>
      <span class="st st11"><svg width="14" height="14" viewBox="0 0 14 14"><rect x="3" y="3" width="9" height="10" fill="#dfe7f2" stroke="#6a7f9c"/><path d="M3 1l1 2 2 1-2 1-1 2-1-2-2-1 2-1z" fill="#e89a1c"/></svg></span>
    </div>
    <div class="hsplit"></div>
    <div class="hscroll">
      <span class="harrow"><i class="lf"></i></span>
      <span class="hthumb"><svg width="7" height="9" viewBox="0 0 7 9"><path d="M.5 0v9M3.500 0v9M6.500 0v9" stroke="#777"/></svg></span>
      <span class="htrack"></span>
      <span class="harrow"><i class="rt"></i></span>
      <span class="hsplit2"></span>
    </div>
  </div>

  <footer class="status">
    <span class="ready">Ready</span>
    <div class="statright">
      <span class="vw on"><svg width="14" height="14" viewBox="0 0 14 14"><rect x=".5" y=".5" width="13" height="13" fill="#fff" stroke="#555"/><path d="M5 1v12M9 1v12M1 5h12M1 9h12" stroke="#555"/></svg></span>
      <span class="vw"><svg width="14" height="16" viewBox="0 0 14 16"><rect x=".5" y=".5" width="13" height="15" fill="#e8e8e8" stroke="#555"/><rect x="3.500" y="3.500" width="7" height="9" fill="#fff" stroke="#777"/></svg></span>
      <span class="vw"><svg width="14" height="16" viewBox="0 0 14 16"><rect x=".5" y=".5" width="13" height="15" fill="#e8e8e8" stroke="#555"/><path d="M7 1v9M1 10h12" stroke="#555"/></svg></span>
      <span class="zoomtxt">100%</span>
      <span class="zb">−</span>
      <span class="zline"><i></i></span>
      <span class="zb">+</span>
    </div>
  </footer>
</div>
</body>
</html>
```
FILE: styles.css
```css
* { box-sizing: border-box; }
html, body { margin: 0; padding: 0; }
body { width: 1919px; height: 1197px; overflow: hidden; font-family: "Noto Sans", "Open Sans", sans-serif; background: #e0e3e8; }
.app { width: 1919px; height: 1197px; display: flex; flex-direction: column; overflow: hidden; }
i { font-style: normal; display: block; }

.dd { display: inline-block; width: 0; height: 0; border-left: 3px solid transparent; border-right: 3px solid transparent; border-top: 4px solid #555; flex: none; }
.dd.gr { border-top-color: #a6a6a6; }
.dd.dark { border-left-width: 4px; border-right-width: 4px; border-top: 5px solid #333; }
.dd.ml { margin-left: 5px; vertical-align: middle; }

/* title + tabs */
.top { height: 44px; flex: none; position: relative; z-index: 2;
  background:
    linear-gradient(90deg, #ece8e4 0, #c9bfb6 10%, rgba(120,105,95,.6) 20%, rgba(0,0,0,0) 36%) 0 0 / 100% 18px no-repeat,
    linear-gradient(#000 0, #050505 6px, #565656 12px, #b8b8b8 18px, #e6e6e6 25px, #f1f0ef 32px, #e8e9eb 44px); }
.titlerow { height: 21px; display: flex; align-items: flex-start; position: relative; }
.qat { display: flex; align-items: center; height: 16px; width: 852px; flex: none; }
.qat .xl { margin-left: 0; }
.qsep { width: 1px; height: 14px; background: #555; margin: 0 6px; }
.qat .un { margin-left: 9px; }
.qd { margin-left: 4px; border-top-color: #8d8f92; }
.qat .re { margin-left: 8px; }
.qat .cu { margin-left: 0; }
.apptitle { font: 11.5px/20px "Noto Sans", sans-serif; color: #111; white-space: pre; display: flex; text-shadow: 0 0 6px #fff, 0 0 3px #fff; letter-spacing: -.15px; }
.titlegap { display: inline-block; width: 75px; }
.clock { position: absolute; left: 863px; top: 0; width: 78px; height: 22px; background: #fdfdf5; border: 1px solid #e00000; color: #0b1a3a; overflow: hidden; }
.clocklab { display: block; font: 7px/7px "Liberation Mono", monospace; color: #111; padding-left: 1px; }
.clockdigits { display: flex; align-items: center; justify-content: space-between; padding: 0 1px 0 1px; height: 13px; }
.clockdigits b { font: bold 15px/13px "Liberation Mono", monospace; letter-spacing: 1.5px; }
.clockdigits i { font: 8px/13px "Liberation Mono", monospace; }
.winbtns { position: absolute; right: 2px; top: -1px; display: flex; width: 103px; height: 16px; border: 1px solid #8a8d91; border-top: 0; border-radius: 0 0 4px 4px; overflow: hidden; }
.wb { display: flex; align-items: center; justify-content: center; height: 15px; }
.wmin { width: 29px; border-right: 1px solid #777; background: linear-gradient(#222, #777); }
.wmin i { width: 11px; height: 3px; margin-top: 6px; background: #e8e8e8; }
.wres { width: 26px; border-right: 1px solid #777; background: linear-gradient(#222, #777); }
.wres i { width: 9px; height: 10px; border: 2px solid #e8e8e8; }
.wclose { flex: 1; background: linear-gradient(#5f1f18, #c8564a); color: #eee; font: bold 13px "Noto Sans", sans-serif; }

.tabrow { height: 23px; display: flex; align-items: flex-end; position: relative; }
.filetab { width: 54px; height: 23px; background: linear-gradient(#2f9b48, #176e2b); color: #fff; font: 12px/23px "Noto Sans", sans-serif; text-align: center; border-radius: 3px 3px 0 0; margin-right: 6px; }
.tab { font: 11.5px/23px "Noto Sans", sans-serif; color: #333; text-align: center; height: 23px; flex: none; }
.tab.home { width: 55px; background: #fff; border: 1px solid #b5b8bc; border-bottom: 0; border-radius: 3px 3px 0 0; height: 24px; margin-bottom: -1px; line-height: 22px; margin-right: 1px; }
.w56 { width: 56px; }
.w60 { width: 60px; }
.w72 { width: 72px; }
.w92 { width: 92px; }
.helpbtns { position: absolute; right: 3px; top: 2px; width: 97px; height: 18px; display: flex; align-items: center; justify-content: space-between; }
.help { width: 16px; height: 16px; border-radius: 50%; background: radial-gradient(circle at 40% 30%, #7fb0ea, #2869c7); color: #fff; font: bold 12px/16px "Noto Sans", sans-serif; text-align: center; }
.bookx { font: bold 12px/14px "Noto Sans", sans-serif; color: #fff; text-shadow: 0 0 1px #000, 0 0 1px #000; }

/* ribbon */
.ribbon { height: 86px; flex: none; display: flex; background: linear-gradient(#fff 0, #fff 55%, #eceef1 100%); border-top: 1px solid #b8bbbf; border-bottom: 1px solid #abaeb2; font: 11px/14px "Noto Sans", sans-serif; color: #3b3b3b; }
.grp { display: flex; flex-direction: column; border-right: 2px solid #e0e2e5; flex: none; position: relative; }
.g1 { width: 150px; }
.g2 { width: 208px; }
.g3 { width: 259.5px; }
.g4 { width: 142.5px; }
.g5 { width: 366.5px; }
.g6 { width: 134.5px; }
.g7 { width: 177px; }
.gbody { flex: 1; display: flex; min-height: 0; }
.gbody.stack { flex-direction: column; }
.glabel { height: 18px; font: 11px/21px "Noto Sans", sans-serif; color: #6d7a90; text-align: center; position: relative; flex: none; }
.launch { position: absolute; right: 5px; top: 6px; width: 8px; height: 8px; border: 1px solid #a8acb2; border-top: 0; border-left: 0; }

.bigbtn { display: flex; flex-direction: column; align-items: center; flex: none; padding-top: 4px; }
.biglab { margin-top: 3px; line-height: 14px; font-size: 11px; }
.bigbtn .dd { margin-top: 4px; }
.biglab2 { line-height: 13px; text-align: center; margin-top: 3px; white-space: nowrap; }
.dimb { color: #9a9a9a; }
.paste { width: 46px; }
.smallcol { display: flex; flex-direction: column; padding-top: 3px; margin-left: 2px; }
.sm { height: 22px; display: flex; align-items: center; white-space: nowrap; }
.sm svg { width: 16px; margin-right: 3px; flex: none; }

.frow { display: flex; align-items: center; height: 22px; flex: none; }
.f1 { margin-top: 10px; padding-left: 5px; }
.f2 { margin-top: 7px; padding-left: 5px; }
.combo { display: flex; align-items: center; background: #fff; border: 1px solid #c2c6cb; height: 22px; padding-left: 3px; font: 11.5px "Noto Sans", sans-serif; position: relative; }
.combo .right { position: absolute; right: 6px; top: 8px; }
.fname { width: 112px; }
.fsize { width: 43px; border-left: 0; }
.glyph { font: bold 15px "Liberation Serif", serif; color: #808080; text-align: center; width: 21px; }
.glyph.big { font-size: 17px; margin-left: 1px; }
.glyph sup { font-size: 7px; vertical-align: top; }
.gi { text-align: center; flex: none; color: #8a8a8a; }
.w22 { width: 23px; }
.serif { font: bold 14px "Liberation Serif", serif; }
.it { font-style: italic; }
.un { text-decoration: underline; }
.vsep { width: 1px; height: 20px; background: #d6d8db; flex: none; }
.s1 { margin-left: 8px; }
.bd { margin-left: 9px; }
.s2 { margin-left: 4px; }
.s3 { margin-left: 8px; }
.fl { margin-left: 7px; }
.s4 { margin-left: 5px; }
.s5 { margin-left: 2px; font-size: 15px; }

.a1 { margin-top: 9px; height: 24px; padding-left: 10px; }
.a2 { margin-top: 4px; height: 24px; padding-left: 10px; }
.al { margin-right: 10px; flex: none; }
.a1s, .a2s { margin-left: 1px; }
.or { margin-left: 5px; }
.a1 .dd { margin-left: 2px; }
.a1t { margin-left: 23px; }
.a2t { margin-left: 8px; }
.in1 { margin-left: 6px; }
.in2 { margin-left: 8px; }
.wr { margin-left: 7px; margin-right: 2px; flex: none; }
.dim { color: #9a9a9a; white-space: nowrap; }
.a2 .dim { letter-spacing: -.15px; }

.n1 { margin-top: 10px; padding-left: 5px; }
.nfmt { width: 134px; background: #fafbfc; }
.n2 { margin-top: 8px; padding-left: 10px; }
.dol { width: 12px; font-size: 14px; margin-right: 5px; }
.pct { width: 18px; margin-left: 6px; font-size: 12px; }
.cma { width: 12px; margin-left: 8px; font: bold 14px "Noto Sans", sans-serif; }
.n2s { margin-left: 8px; }
.dec { font: 9px/9px "Noto Sans", sans-serif; color: #909090; width: 24px; text-align: center; }
.dec:first-of-type { margin-left: 2px; }

.cf { width: 62px; margin-left: 9.5px; }
.ft { width: 60px; margin-left: 0; }
.gallery { width: 215px; height: 60px; margin: 5px 0 0 0; background: #fff; border: 1px solid #c6c9cd; }
.galbtns { width: 14px; height: 60px; margin-top: 5px; display: flex; flex-direction: column; border: 1px solid #dcdee1; border-left: 0; }
.galbtns span { flex: 1; display: flex; align-items: center; justify-content: center; border-bottom: 1px solid #dcdee1; }
.up, .dn { width: 0; height: 0; border-left: 4px solid transparent; border-right: 4px solid transparent; }
.up { border-bottom: 5px solid #666; }
.dn { border-top: 5px solid #666; }
.galbtns .up { border-bottom-color: #bbb; }
.galbtns .dn { border-top-color: #bbb; }
.cellb { width: 42px; padding-top: 7px; }
.cellb:first-child { margin-left: 5px; }
.edit { margin-left: 9px; width: 84px; }
.sigma { width: 16px; margin-right: 3px; color: #888; font-size: 14px; text-align: center; }
.sortb { width: 40px; margin-left: 0; padding-top: 6px; }
.findb { width: 42px; padding-top: 6px; }
.azt { font: bold 17px "Liberation Serif", serif; fill: #bdbdbd; }

/* formula bar */
.fbar { height: 30px; flex: none; display: flex; padding: 3px 0 4px; background: #dfe1e5; border-bottom: 1px solid #a9adb2; }
.namebox { width: 160px; background: #fff; display: flex; align-items: center; justify-content: space-between; padding: 0 6px 0 60px; font: 13px "Noto Sans", sans-serif; color: #111; border-top: 1px solid #b8bbbf; border-bottom: 1px solid #b8bbbf; }
.fmid { width: 84px; display: flex; align-items: center; background: #f4f5f6; border-top: 1px solid #b8bbbf; border-bottom: 1px solid #b8bbbf; border-right: 1px solid #aaa; }
.ball { width: 30px; height: 20px; border-radius: 0 14px 14px 0; background: #e6e7e9; border: 1px solid #b4b7bb; border-left: 0; margin-left: 0; position: relative; }
.fx { font: italic bold 15px "Liberation Serif", serif; margin-left: 35px; color: #333; }
.fx sub { font-size: 10px; vertical-align: -1px; }
.finput { flex: 1; background: #fff; font: 13.3px/21px "Lato", sans-serif; color: #111; padding-left: 8px; border-top: 1px solid #b8bbbf; border-bottom: 1px solid #b8bbbf; white-space: nowrap; overflow: hidden; }
.fexp { width: 15px; background: linear-gradient(#f0f1f3, #d8dade); border: 1px solid #b0b3b7; display: flex; align-items: center; justify-content: center; }

/* sheet */
.work { height: 998px; flex: none; display: flex; }
.grid { width: 1904px; height: 998px; position: relative; overflow: hidden; background: #10253f; }
.row { display: grid; height: 20px; grid-template-columns: 25px 75px 167px 89px 96px 96.6px 125px 64.4px 77.5px 64.5px 65px 65px 84px 97px 86px 110px 64px 91px 68px 98px 114px 82px; }
.row.tall { height: 21px; }
.chead > div { height: 20px; background: linear-gradient(#e7e9ec, #dcdfe3); border-right: 1px solid #a8acb1; border-bottom: 1px solid #9ea4ab; font: 13.5px/19px "Lato", sans-serif; color: #444; text-align: center; }
.chead > div.on { background: linear-gradient(#fbe08f, #f6c95a); border-right-color: #d49b2a; border-bottom-color: #d49b2a; color: #6f5a23; }
.chead .corner { position: relative; overflow: hidden; }
.corner i { position: absolute; right: 2px; bottom: 2px; width: 0; height: 0; border-left: 13px solid transparent; border-bottom: 13px solid #c4c8cd; }
.rh { grid-column: 1; background: linear-gradient(90deg, #e7e9ec, #dcdfe3); border-right: 1px solid #9ea4ab; border-bottom: 1px solid #9ea4ab; font: 13.5px/19px "Lato", sans-serif; color: #444; text-align: center; }
.rh.act13 { background: #ffe9a6; color: #8a7638; border-color: #e3b548; }
.rh.act46 { background: linear-gradient(90deg, #fbe08f, #f6c95a); color: #6f5a23; border-color: #d49b2a; }

.cell { display: flex; align-items: center; padding: 0 3px; overflow: hidden; white-space: nowrap; font: 13.9px "Lato", sans-serif; color: #0a0a0a; position: relative; min-width: 0; }
.cell b { font-size: 13.7px; }
.cell.red b { font-size: 14.2px; }
.cell.end { justify-content: flex-end; }
.cell.end.br { padding-right: 1px; }
.a { grid-column: 2; }
.b { grid-column: 3; }
.c { grid-column: 4; }
.d { grid-column: 5; }
.f { grid-column: 7; }
.g { grid-column: 8; }
.h { grid-column: 9; }
.i { grid-column: 10; }
.j { grid-column: 11; }
.m { grid-column: 14; }
.n { grid-column: 15; }
.o { grid-column: 16; }
.p { grid-column: 17; }
.q { grid-column: 18; }
.r { grid-column: 19; }
.s { grid-column: 20; }
.t { grid-column: 21; }
.u { grid-column: 22; }
.sp-ab { grid-column: 2 / 4; }
.yel { background: #ffe699; }
.grn { background: #c6efce; }
.pv { background: #dce6f1; border-bottom: 1px solid #95b3d7; }
.wh { background: #fff; }
.bb { border-bottom: 2px solid #000; }
.br { border-right: 2px solid #000; }
.rb { border-right: 2px solid #000; padding-right: 1px; }
.dkg { color: #00702f; }
.dkt { color: #0c3d20; }
.red b { color: #ff0000; }
.note { position: absolute; right: 0; top: 0; width: 0; height: 0; border-top: 5px solid #f00; border-left: 5px solid transparent; }
.fbtn { position: absolute; right: 0; top: 1px; width: 17px; height: 17px; border: 1px solid #9aa0a7; background: linear-gradient(#fff, #dfe2e6); }
.fbtn::after { content: ""; position: absolute; left: 4px; top: 6px; border-left: 4px solid transparent; border-right: 4px solid transparent; border-top: 4px solid #555; }
.recalc { width: 225px; height: 21px; margin-left: -3px; background: linear-gradient(#f79b9b, #ff8585); border: 2px solid #cf6f6f; border-right: 3px solid #8c3a3a; border-bottom: 3px solid #8c3a3a; text-align: center; font: bold 13.7px/17px "Lato", sans-serif; color: #0a0a0a; }

.selbox { position: absolute; left: 548px; top: 928px; width: 126px; height: 22px; border: 3px solid #f2dcc0; }
.selbox i { position: absolute; right: -5px; bottom: -5px; width: 6px; height: 6px; background: #f2dcc0; border: 1px solid #10253f; }

.chart { position: absolute; background: #fff; outline: 1px solid #868686; outline-offset: -1px; display: block; }
.c1 { left: 357px; top: 27px; }
.c2 { left: 1098px; top: 27px; }
.c3 { left: 357px; top: 436px; }
.c4 { left: 358px; top: 639px; outline-color: #fff; }
.c5 { left: 1098px; top: 435px; }
.chart text { font-family: "Lato", sans-serif; fill: #0b1220; }
.ttl { font-size: 22.3px; font-weight: 700; text-anchor: middle; }
.ttls { font-size: 13.8px; font-weight: 700; text-anchor: middle; }
.sub { font-size: 10.2px; font-weight: 700; text-anchor: middle; }
.yl text { font-size: 12px; text-anchor: end; }
.xl text { font-size: 12px; text-anchor: middle; }
.rl text { font-size: 12px; text-anchor: start; }
.vl text { font-size: 12px; text-anchor: start; letter-spacing: .8px; }
.axt { font-size: 12px; text-anchor: middle; letter-spacing: .45px; }
.maj { fill: none; stroke: #868686; stroke-width: 1; }
.minor { stroke: #b4b4b4; fill: none; }
.tk4 { stroke: #868686; stroke-width: 4; fill: none; }
.tk3 { stroke: #868686; stroke-width: 3; fill: none; }
.acc { stroke: #4bacc6; stroke-width: 3; }
.area { fill: #4f81bd; }
.cum { fill: none; stroke: #008000; stroke-width: 3; }

.vscroll { width: 15px; height: 998px; flex: none; display: flex; flex-direction: column; align-items: stretch; background: #e0e3e8; border-left: 1px solid #c8cbd0; }
.splitv { height: 7px; background: linear-gradient(#fff, #dfe1e5); border: 1px solid #9aa0a7; flex: none; }
.vbtn { height: 15px; display: flex; align-items: center; justify-content: center; flex: none; }
.vgap { height: 3px; flex: none; }
.vthumb { height: 21px; background: linear-gradient(90deg, #f6f7f8, #e4e6ea); border: 1px solid #9aa0a7; border-radius: 2px; display: flex; align-items: center; justify-content: center; flex: none; }
.vtrack { flex: 1; }

/* sheet tabs */
.sheetbar { height: 16px; flex: none; display: flex; background: #e0e3e8; border-top: 1px solid #9ea4ab; border-bottom: 1px solid #9ea4ab; }
.sheetnav { width: 62px; flex: none; display: flex; align-items: center; justify-content: space-between; padding: 0 9px 0 5px; }
.sheets { width: 1120px; flex: none; display: flex; overflow: hidden; }
.st { height: 14px; flex: none; margin-right: -6px; clip-path: polygon(9px 0, 100% 0, calc(100% - 9px) 100%, 0 100%); font: 12.5px/14px "Lato", sans-serif; text-align: center; white-space: nowrap; padding: 0 8px; }
.st0 { width: 18px; background: #e020e0; clip-path: polygon(0 0, 100% 0, calc(100% - 9px) 100%, 0 100%); margin-right: -8px; }
.st1 { width: 99px; background: linear-gradient(#a2d672, #8cc45c); color: #1a2a0a; }
.st2 { width: 77px; background: #1c1c1c; color: #fff; }
.st3 { width: 67px; background: #ffff00; color: #333; }
.st4 { width: 95px; background: linear-gradient(#fff 60%, #ffc8c8); color: #000; font-weight: 700; font-size: 12.5px; clip-path: none; position: relative; z-index: 2; }
.st5 { width: 95px; background: #c00000; color: #fff; }
.st6 { width: 110px; background: linear-gradient(#2f8ed2, #1f76ba); color: #fff; }
.st7 { width: 113px; background: linear-gradient(#2f8ed2, #1f76ba); color: #fff; }
.st8 { width: 168px; background: linear-gradient(#2f8ed2, #1f76ba); color: #fff; }
.st9 { width: 92px; background: #00b050; color: #09301a; }
.st10 { width: 121px; background: #00b050; color: #09301a; }
.st11 { width: 41px; background: #f3f4f6; padding: 0 0 0 7px; text-align: left; }
.hsplit { width: 6px; flex: none; background: #f4f5f6; border: 1px solid #9aa0a7; }
.hscroll { flex: 1; display: flex; align-items: stretch; }
.harrow { width: 17px; flex: none; display: flex; align-items: center; justify-content: center; }
.lf, .rt { width: 0; height: 0; border-top: 5px solid transparent; border-bottom: 5px solid transparent; }
.lf { border-right: 5px solid #555; }
.rt { border-left: 5px solid #555; }
.hthumb { width: 349px; flex: none; background: linear-gradient(#f6f7f8, #e2e4e8); border: 1px solid #b0b4ba; border-radius: 2px; display: flex; align-items: center; justify-content: center; }
.htrack { flex: 1; }
.hsplit2 { width: 7px; flex: none; background: #f4f5f6; border: 1px solid #9aa0a7; }

/* status */
.status { flex: 1; display: flex; align-items: center; background: linear-gradient(#e8e9ec, #bfc2c7); font: 11px "Noto Sans", sans-serif; color: #444; position: relative; }
.ready { width: 48px; height: 100%; padding-left: 7px; display: flex; align-items: center; border-right: 1px solid #a8abb0; }
.statright { margin-left: auto; display: flex; align-items: center; height: 100%; width: 237px; }
.vw { width: 19px; height: 21px; display: flex; align-items: center; justify-content: center; }
.vw.on { background: linear-gradient(#fde9a9, #f9cf5f); border: 1px solid #d8a83a; border-radius: 2px; }
.zoomtxt { margin-left: 9px; width: 36px; }
.zb { width: 16px; height: 16px; border-radius: 50%; background: linear-gradient(#fff, #d8dade); border: 1px solid #8c8f94; font: bold 13px/13px "Noto Sans", sans-serif; text-align: center; color: #333; flex: none; }
.zline { width: 101px; height: 1px; background: #8d9096; position: relative; }
.zline i { position: absolute; left: 50%; top: -7px; width: 8px; height: 14px; background: #f6f6f6; border: 1px solid #777; border-radius: 1px 1px 4px 4px; margin-left: -4px; }
```
